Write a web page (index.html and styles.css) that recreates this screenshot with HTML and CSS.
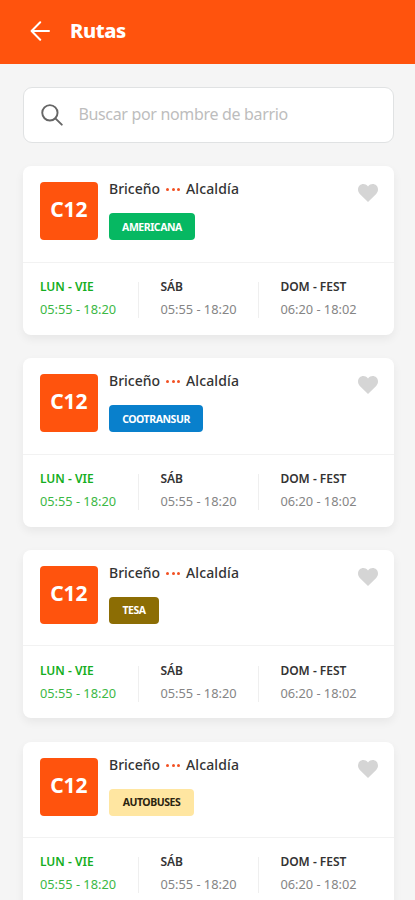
FILE: index.html
```html
<!DOCTYPE html>
<html lang="es">
<head>
<meta charset="utf-8">
<meta name="viewport" content="width=device-width, initial-scale=1">
<title>Rutas</title>
<link rel="stylesheet" href="styles.css">
</head>
<body>
<header class="topbar">
  <svg class="back" viewBox="0 0 20 20"><path d="M10.2 1.2 1.6 10l8.600 8.800M1.800 10H19"/></svg>
  <h1>Rutas</h1>
</header>
<main>
  <div class="search">
    <svg class="lens" viewBox="0 0 23 23"><circle cx="9.3" cy="9.2" r="8"/><path d="m15 15 6.7 6.6"/></svg>
    <span class="placeholder">Buscar por nombre de barrio</span>
  </div>
  <article class="card">
    <div class="route">
      <div class="code"><span>C12</span></div>
      <div class="info">
        <div class="path"><span class="from">Briceño</span><span class="dots"><i></i><i></i><i></i></span><span class="to">Alcaldía</span></div>
        <span class="tag americana"><b>AMERICANA</b></span>
      </div>
      <svg class="heart" viewBox="0 0 20 18"><path d="M10 18 1.8 9.9C-.6 7.400-.5 3.700 1.600 1.600 3.900-.6 7.500-.5 10 2.400 12.500-.5 16.100-.6 18.400 1.600c2.100 2.100 2.200 5.800-.2 8.300Z"/></svg>
    </div>
    <div class="times">
      <div class="slot active"><strong>LUN - VIE</strong><span>05:55 - 18:20</span></div>
      <div class="slot sat"><strong>SÁB</strong><span>05:55 - 18:20</span></div>
      <div class="slot sun"><strong>DOM - FEST</strong><span>06:20 - 18:02</span></div>
    </div>
  </article>
  <article class="card">
    <div class="route">
      <div class="code"><span>C12</span></div>
      <div class="info">
        <div class="path"><span class="from">Briceño</span><span class="dots"><i></i><i></i><i></i></span><span class="to">Alcaldía</span></div>
        <span class="tag cootransur"><b>COOTRANSUR</b></span>
      </div>
      <svg class="heart" viewBox="0 0 20 18"><path d="M10 18 1.8 9.9C-.6 7.400-.5 3.700 1.600 1.600 3.900-.6 7.500-.5 10 2.400 12.500-.5 16.100-.6 18.400 1.600c2.100 2.100 2.200 5.800-.2 8.300Z"/></svg>
    </div>
    <div class="times">
      <div class="slot active"><strong>LUN - VIE</strong><span>05:55 - 18:20</span></div>
      <div class="slot sat"><strong>SÁB</strong><span>05:55 - 18:20</span></div>
      <div class="slot sun"><strong>DOM - FEST</strong><span>06:20 - 18:02</span></div>
    </div>
  </article>
  <article class="card">
    <div class="route">
      <div class="code"><span>C12</span></div>
      <div class="info">
        <div class="path"><span class="from">Briceño</span><span class="dots"><i></i><i></i><i></i></span><span class="to">Alcaldía</span></div>
        <span class="tag tesa"><b>TESA</b></span>
      </div>
      <svg class="heart" viewBox="0 0 20 18"><path d="M10 18 1.8 9.9C-.6 7.400-.5 3.700 1.600 1.600 3.900-.6 7.500-.5 10 2.400 12.500-.5 16.100-.6 18.400 1.600c2.100 2.100 2.200 5.800-.2 8.300Z"/></svg>
    </div>
    <div class="times">
      <div class="slot active"><strong>LUN - VIE</strong><span>05:55 - 18:20</span></div>
      <div class="slot sat"><strong>SÁB</strong><span>05:55 - 18:20</span></div>
      <div class="slot sun"><strong>DOM - FEST</strong><span>06:20 - 18:02</span></div>
    </div>
  </article>
  <article class="card">
    <div class="route">
      <div class="code"><span>C12</span></div>
      <div class="info">
        <div class="path"><span class="from">Briceño</span><span class="dots"><i></i><i></i><i></i></span><span class="to">Alcaldía</span></div>
        <span class="tag autobuses"><b>AUTOBUSES</b></span>
      </div>
      <svg class="heart" viewBox="0 0 20 18"><path d="M10 18 1.8 9.9C-.6 7.400-.5 3.700 1.600 1.600 3.900-.6 7.500-.5 10 2.400 12.500-.5 16.100-.6 18.400 1.600c2.100 2.100 2.200 5.800-.2 8.300Z"/></svg>
    </div>
    <div class="times">
      <div class="slot active"><strong>LUN - VIE</strong><span>05:55 - 18:20</span></div>
      <div class="slot sat"><strong>SÁB</strong><span>05:55 - 18:20</span></div>
      <div class="slot sun"><strong>DOM - FEST</strong><span>06:20 - 18:02</span></div>
    </div>
  </article>
</main>
</body>
</html>
```
FILE: styles.css
```css
* { box-sizing: border-box; }
html, body { height: 900px; overflow: hidden; }
body {
  margin: 0;
  background: #f5f5f5;
  font-family: "Noto Sans", "Open Sans", sans-serif;
  color: #333;
}
.topbar {
  height: 64px;
  background: #ff530d;
  display: flex;
  align-items: center;
  padding: 0 0 2px 30px;
}
.back { width: 20px; height: 20px; fill: none; stroke: #fff; stroke-width: 2; stroke-linecap: round; stroke-linejoin: round; }
h1 { margin: 0 0 0 20px; font-size: 20px; line-height: 28px; font-weight: 800; color: #fff; letter-spacing: -.4px; }
main { padding: 23px 21px 0 23.400px; }
.search {
  height: 56px;
  background: #fff;
  border: 1px solid #e0e2e3;
  border-radius: 9px;
  display: flex;
  align-items: center;
  padding-left: 16.600px;
}
.lens { width: 22px; height: 22px; fill: none; stroke: #666; stroke-width: 2; stroke-linecap: round; }
.placeholder { margin: -2px 0 0 15.400px; font-size: 16px; line-height: 22px; letter-spacing: -.33px; color: #bdbdbd; white-space: nowrap; }
.card {
  height: 168.500px;
  margin-top: 23.300px;
  background: #fff;
  border-radius: 8px;
  box-shadow: 0 4px 10px rgba(0, 0, 0, .06);
}
.route {
  height: 96.500px;
  border-bottom: 1px solid #f2f2f2;
  display: flex;
  padding: 16px 16.500px 0 16.500px;
}
.code {
  width: 58px;
  height: 58px;
  border-radius: 4px;
  background: #ff530d;
  color: #fff;
  font-size: 21px;
  font-weight: 700;
  line-height: 54px;
  text-align: center;
}
.info { flex: 1; margin-left: 11.100px; }
.path { display: flex; height: 16px; margin-top: -1px; line-height: 16px; font-size: 14px; font-weight: 500; white-space: nowrap; }
.from { width: 57px; }
.dots { width: 20px; display: flex; gap: 2.700px; padding-top: 7px; }
.dots i { width: 3px; height: 3px; border-radius: 50%; background: #f25022; }
.to { letter-spacing: .12px; }
.tag {
  display: inline-flex;
  align-items: center;
  justify-content: center;
  height: 27px;
  margin-top: 16px;
  border-radius: 4px;
  color: #fff;
  font-size: 10.500px;
  line-height: 14px;
  letter-spacing: -.45px;
}
.tag b { font-weight: 700; }
.americana { width: 86px; background: #06b862; }
.cootransur { width: 94px; background: #0980cc; }
.tesa { width: 50px; background: #8c6d04; }
.autobuses { width: 85px; background: #ffe6a1; color: #2b2410; }
.heart { width: 20px; height: 18px; margin-top: 2px; fill: #d5d5d5; }
.times { display: flex; padding: 16.200px 0 0 16.500px; }
.slot { height: 40px; white-space: nowrap; }
.slot strong { display: block; font-size: 12px; line-height: 16px; font-weight: 600; }
.slot span { display: block; margin-top: 6px; font-size: 12.800px; line-height: 16px; color: #858585; }
.slot.active { width: 98.500px; color: #14ae21; }
.slot.active span { color: #3cb845; }
.sat, .sun { height: 36px; margin-top: 3px; border-left: 1px solid #efefef; padding-left: 21px; width: 120px; }
.sat strong, .sun strong { margin-top: -3px; }
```
